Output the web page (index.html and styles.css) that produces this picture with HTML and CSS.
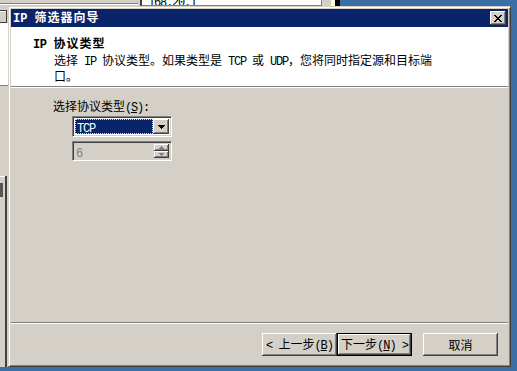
FILE: index.html
```html
<!DOCTYPE html>
<html lang="zh-CN">
<head>
<meta charset="utf-8">
<title>IP 筛选器向导</title>
<link rel="stylesheet" href="styles.css">
</head>
<body>
<div class="desktop">
  <div class="bg-window">
    <div class="bg-rule"></div>
    <div class="bg-list"><span class="en">168.20.1</span></div>
    <div class="bg-scroll"></div>
    <div class="bg-tip"></div>
    <div class="bg-edge"></div>
    <div class="bg-box"></div>
    <div class="bg-white"></div>
    <div class="bg-panel"></div>
    <div class="bg-knob"></div>
  </div>

  <div class="dialog">
    <div class="titlebar">
      <span class="title"><span class="en">IP </span>筛选器向导</span>
      <button class="close" aria-label="关闭">
        <svg width="8" height="7" viewBox="0 0 8 7" shape-rendering="crispEdges"><path d="M0 0h2v1H0zM6 0h2v1H6zM1 1h2v1H1zM5 1h2v1H5zM2 2h4v1H2zM3 3h2v1H3zM2 4h4v1H2zM1 5h2v1H1zM5 5h2v1H5zM0 6h2v1H0zM6 6h2v1H6z" fill="#000"/></svg>
      </button>
    </div>

    <div class="header">
      <div class="header-title"><span class="en">IP </span>协议类型</div>
      <div class="header-sub">选择<span class="en"> IP </span>协议类型。如果类型是<span class="en"> TCP </span>或<span class="en"> UDP</span>，您将同时指定源和目标端<br>口。</div>
    </div>
    <div class="sep"></div>

    <div class="content">
      <label class="field-label">选择协议类型<span class="en">(<u>S</u>):</span></label>
      <div class="field">
        <div class="combo">
          <div class="combo-value"><span class="en">TCP</span></div>
          <div class="combo-btn">
            <svg width="7" height="4" viewBox="0 0 7 4" shape-rendering="crispEdges"><path d="M0 0h7v1H0zM1 1h5v1H1zM2 2h3v1H2zM3 3h1v1H3z" fill="#000"/></svg>
          </div>
        </div>
        <div class="spin">
          <div class="spin-value"><span class="en">6</span></div>
          <div class="spin-btns">
            <div class="spin-btn">
              <svg width="5" height="3" viewBox="0 0 5 3" shape-rendering="crispEdges"><path d="M2 0h1v1H2zM1 1h3v1H1zM0 2h5v1H0z" fill="#808080"/></svg>
            </div>
            <div class="spin-btn">
              <svg width="5" height="3" viewBox="0 0 5 3" shape-rendering="crispEdges"><path d="M0 0h5v1H0zM1 1h3v1H1zM2 2h1v1H2z" fill="#808080"/></svg>
            </div>
          </div>
        </div>
      </div>
    </div>

    <div class="sep"></div>
    <div class="buttons">
      <button class="btn"><span class="en">&lt; </span>上一步<span class="en">(<u>B</u>)</span></button>
      <button class="btn default">下一步<span class="en">(<u>N</u>) &gt;</span></button>
      <button class="btn cancel">取消</button>
    </div>
  </div>
</div>
</body>
</html>
```

FILE: styles.css
```css
html, body {
  margin: 0;
  padding: 0;
}

body {
  width: 517px;
  height: 371px;
  overflow: hidden;
  background: #3a6ea5;
  font-family: "Noto Sans CJK SC", sans-serif;
  font-size: 12px;
  color: #000;
}

.en {
  font-family: "Liberation Mono", monospace;
  letter-spacing: -1.2px;
}

.desktop {
  position: relative;
  width: 517px;
  height: 371px;
}

/* ---- window behind the dialog ---- */
.bg-window {
  position: absolute;
  left: 0;
  top: 0;
  width: 340px;
  height: 367px;
  background: #d4d0c8;
  overflow: hidden;
}

.bg-rule {
  position: absolute;
  left: 0;
  top: 3px;
  width: 138px;
  height: 1px;
  background: #808080;
  border-bottom: 1px solid #fff;
}

.bg-list {
  position: absolute;
  left: 140px;
  top: -5px;
  width: 173px;
  height: 10px;
  background: #fff;
  border-left: 2px solid #404040;
  border-right: 1px solid #808080;
  border-bottom: 1px solid #808080;
  padding-left: 6px;
  line-height: 12px;
  font-size: 12px;
  overflow: hidden;
}

.bg-scroll {
  position: absolute;
  left: 331px;
  top: 0;
  width: 4px;
  height: 6px;
  background: #ffffe1;
}

.bg-tip {
  position: absolute;
  left: 335px;
  top: 0;
  width: 5px;
  height: 6px;
  background: #000;
}

.bg-box {
  position: absolute;
  left: -6px;
  top: 10px;
  width: 11px;
  height: 11px;
  border: 1px solid #404040;
  background: #d4d0c8;
  box-shadow: inset 1px 1px #fff;
}

.bg-white {
  position: absolute;
  left: 0;
  top: 23px;
  width: 8px;
  height: 62px;
  background: #fff;
  border-bottom: 1px solid #808080;
}

.bg-edge {
  position: absolute;
  left: 0;
  top: 176px;
  width: 5px;
  height: 1px;
  background: #fff;
}

.bg-panel {
  position: absolute;
  left: 5px;
  top: 176px;
  width: 2px;
  height: 200px;
  background: #404040;
}

.bg-knob {
  position: absolute;
  left: 0;
  top: 183px;
  width: 3px;
  height: 14px;
  background: #555;
}

/* ---- dialog window ---- */
.dialog {
  position: absolute;
  left: 8px;
  top: 6px;
  width: 503px;
  height: 361px;
  box-sizing: border-box;
  border: 1px solid;
  border-color: #d4d0c8 #404040 #404040 #d4d0c8;
  box-shadow: inset 1px 1px #fff, inset -1px -1px #808080;
  padding: 2px;
  background: #d4d0c8;
  display: flex;
  flex-direction: column;
}

.titlebar {
  height: 18px;
  flex: none;
  background: #0a246a;
  display: flex;
  align-items: center;
  justify-content: space-between;
  padding: 0 2px 0 2px;
}

.title {
  color: #fff;
  font-weight: bold;
  font-size: 12px;
  line-height: 14px;
  letter-spacing: 1px;
}

.title .en {
  letter-spacing: 0;
}

.close {
  width: 16px;
  height: 14px;
  padding: 0;
  margin: 0;
  border: 0;
  background: #d4d0c8;
  box-shadow: inset -1px -1px #404040, inset 1px 1px #fff, inset -2px -2px #808080;
  display: flex;
  align-items: center;
  justify-content: center;
  padding-right: 1px;
}

.header {
  height: 59px;
  flex: none;
  background: #fff;
  box-sizing: border-box;
  padding: 8px 0 0 22px;
}

.header-title {
  font-weight: bold;
  line-height: 15px;
  font-size: 12px;
  letter-spacing: 1px;
}

.header-title .en {
  letter-spacing: -0.4px;
}

.header-sub {
  padding-left: 21px;
  font-size: 12px;
  line-height: 14px;
}

.sep {
  height: 0;
  flex: none;
  border-top: 1px solid #808080;
  border-bottom: 1px solid #fff;
}

.content {
  flex: 1;
  padding: 10px 0 0 42px;
  display: flex;
  flex-direction: column;
}

.field-label {
  line-height: 15px;
  font-size: 12px;
}

.field {
  padding-left: 19px;
  display: flex;
  flex-direction: column;
  gap: 4px;
}

.combo {
  width: 100px;
  height: 21px;
  box-sizing: border-box;
  border: 1px solid;
  border-color: #808080 #fff #fff #808080;
  box-shadow: inset 1px 1px #404040, inset -1px -1px #d4d0c8;
  background: #fff;
  padding: 2px;
  display: flex;
}

.combo-value {
  flex: 1;
  background: #0a246a;
  color: #fff;
  outline: 1px dotted #e8e4a0;
  outline-offset: -1px;
  line-height: 15px;
  padding-left: 2px;
  margin: 0 1px 0 0;
  font-size: 12px;
}

.combo-btn {
  width: 16px;
  height: 15px;
  box-sizing: border-box;
  background: #d4d0c8;
  box-shadow: inset -1px -1px #404040, inset 1px 1px #fff, inset -2px -2px #808080;
  display: flex;
  align-items: center;
  justify-content: center;
  margin-left: -1px;
}

.spin {
  width: 100px;
  height: 20px;
  box-sizing: border-box;
  border: 1px solid;
  border-color: #808080 #fff #fff #808080;
  box-shadow: inset 1px 1px #404040, inset -1px -1px #d4d0c8;
  background: #d4d0c8;
  padding: 2px;
  display: flex;
}

.spin-value {
  flex: 1;
  color: #808080;
  line-height: 15px;
  padding-left: 1px;
  font-size: 12px;
}

.spin-btns {
  width: 15px;
  display: flex;
  flex-direction: column;
}

.spin-btn {
  flex: 1;
  background: #d4d0c8;
  box-shadow: inset -1px -1px #404040, inset 1px 1px #fff, inset -2px -2px #808080;
  display: flex;
  align-items: center;
  justify-content: center;
}

.buttons {
  height: 40px;
  flex: none;
  box-sizing: border-box;
  padding: 9px 10px 0 0;
  display: flex;
  justify-content: flex-end;
  align-items: flex-start;
}

.btn {
  width: 75px;
  height: 23px;
  margin: 0;
  padding: 0;
  border: 0;
  background: #d4d0c8;
  box-shadow: inset -1px -1px #404040, inset 1px 1px #fff, inset -2px -2px #808080;
  font-family: "Noto Sans CJK SC", sans-serif;
  font-size: 12px;
  color: #000;
  line-height: 21px;
}

.btn .en {
  letter-spacing: -1px;
}

.btn.default {
  box-shadow: inset 0 0 0 1px #000, inset -2px -2px #404040, inset 2px 2px #fff, inset -3px -3px #808080;
}

.btn.cancel {
  margin-left: 11px;
}
```
